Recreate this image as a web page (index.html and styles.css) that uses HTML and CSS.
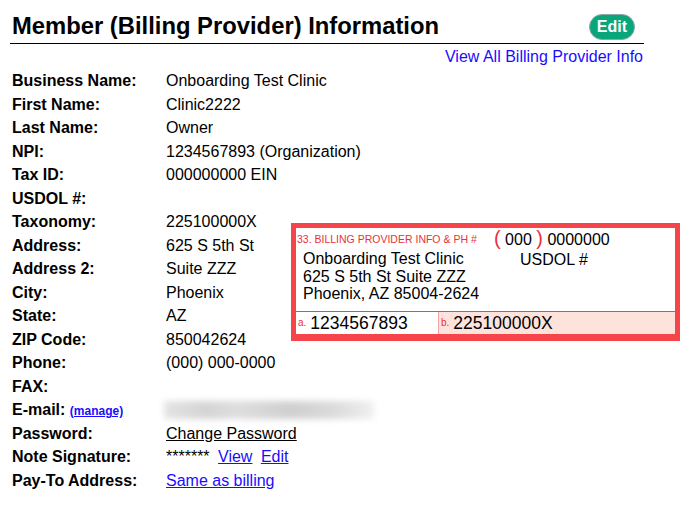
FILE: index.html
```html
<!DOCTYPE html>
<html>
<head>
<meta charset="utf-8">
<link rel="stylesheet" href="styles.css">
</head>
<body>
<div class="page">
  <div class="header">
    <h1 class="title">Member (Billing Provider) Information</h1>
    <span class="edit-btn">Edit</span>
  </div>
  <div class="view-all"><a href="#">View All Billing Provider Info</a></div>
  <div class="info">
    <div class="label">Business Name:</div><div class="value">Onboarding Test Clinic</div>
    <div class="label">First Name:</div><div class="value">Clinic2222</div>
    <div class="label">Last Name:</div><div class="value">Owner</div>
    <div class="label">NPI:</div><div class="value">1234567893 (Organization)</div>
    <div class="label">Tax ID:</div><div class="value">000000000 EIN</div>
    <div class="label">USDOL #:</div><div class="value"></div>
    <div class="label">Taxonomy:</div><div class="value">225100000X</div>
    <div class="label">Address:</div><div class="value">625 S 5th St</div>
    <div class="label">Address 2:</div><div class="value">Suite ZZZ</div>
    <div class="label">City:</div><div class="value">Phoenix</div>
    <div class="label">State:</div><div class="value">AZ</div>
    <div class="label">ZIP Code:</div><div class="value">850042624</div>
    <div class="label">Phone:</div><div class="value">(000) 000-0000</div>
    <div class="label">FAX:</div><div class="value"></div>
    <div class="label">E-mail: <a href="#" class="manage">(manage)</a></div><div class="value"><span class="blurred"></span></div>
    <div class="label">Password:</div><div class="value"><a href="#" class="dark-link">Change Password</a></div>
    <div class="label">Note Signature:</div><div class="value">******* <a href="#" class="sig-link">View</a> <a href="#" class="sig-link">Edit</a></div>
    <div class="label">Pay-To Address:</div><div class="value"><a href="#">Same as billing</a></div>
  </div>

  <div class="claim-box">
    <div class="claim-top">
      <div class="claim-left">
        <div class="claim-caption">33. BILLING PROVIDER INFO &amp; PH #</div>
        <div class="claim-addr">Onboarding Test Clinic<br>625 S 5th St Suite ZZZ<br>Phoenix, AZ 85004-2624</div>
      </div>
      <div class="claim-right">
        <div class="claim-phone"><span class="paren">(</span> 000 <span class="paren">)</span> 0000000</div>
        <div class="claim-usdol">USDOL #</div>
      </div>
    </div>
    <div class="claim-bottom">
      <div class="cell cell-a"><span class="cell-tag">a.</span>1234567893</div>
      <div class="cell cell-b"><span class="cell-tag">b.</span>225100000X</div>
    </div>
  </div>
</div>
</body>
</html>
```

FILE: styles.css
```css
html, body {
  margin: 0;
  padding: 0;
  background: #fff;
}
body {
  font-family: "Liberation Sans", Arial, sans-serif;
  color: #000;
}
.page {
  position: relative;
  width: 683px;
  height: 505px;
  overflow: hidden;
}
.header {
  margin-left: 10px;
  width: 634px;
  display: flex;
  align-items: flex-end;
  justify-content: space-between;
  border-bottom: 1px solid #000;
  height: 44px;
  box-sizing: border-box;
  padding-bottom: 3px;
}
.title {
  margin: 0 0 0 2px;
  font-size: 23.8px;
  line-height: 28px;
  font-weight: bold;
}
.edit-btn {
  display: inline-block;
  margin-right: 9px;
  margin-bottom: 0;
  background: #0aa67b;
  color: #fff;
  font-weight: bold;
  font-size: 16px;
  line-height: 24px;
  padding: 0 7px;
  border-radius: 13px;
  border: 1px solid #8aa;
}
.view-all {
  width: 643px;
  text-align: right;
  font-size: 16px;
  line-height: 18px;
  margin-top: 4px;
}
.view-all a {
  color: #1a0dff;
  text-decoration: none;
}
.info {
  display: grid;
  grid-template-columns: 154px 1fr;
  margin-left: 12px;
  margin-top: 3px;
  font-size: 16px;
  line-height: 23.5px;
}
.label {
  font-weight: bold;
}
.manage {
  font-size: 12px;
  line-height: 14px;
  color: #1a0dff;
}
.blurred {
  display: block;
  width: 210px;
  height: 18px;
  margin: 3px 0 0 -2px;
  background: linear-gradient(90deg, #e4e4e4, #d4d4d4 20%, #dedede 35%, #cfcfcf 60%, #dadada 80%, #f0f0f0);
  filter: blur(3px);
}
.value a {
  color: #1a0dff;
}
.value a.dark-link {
  color: #000;
}
.value a.sig-link {
  margin-left: 4px;
}
.claim-box {
  position: absolute;
  left: 291px;
  top: 223px;
  width: 389px;
  height: 118px;
  box-sizing: border-box;
  border: 5px solid #f5444a;
  border-bottom-width: 7px;
  display: flex;
  flex-direction: column;
  background: #fff;
}
.claim-top {
  flex: 1;
  display: flex;
  border-bottom: 1px solid #f5444a;
}
.claim-left {
  width: 200px;
}
.claim-caption {
  color: #e8323a;
  font-size: 10.5px;
  padding-left: 1px;
  margin-top: 5px;
  line-height: 12px;
  white-space: nowrap;
}
.claim-addr {
  font-size: 16px;
  line-height: 17.5px;
  padding-left: 7px;
  margin-top: 5px;
}
.claim-right {
  flex: 1;
}
.claim-phone {
  font-size: 16px;
  line-height: 20px;
  margin-left: -2px;
}
.paren {
  color: #e8323a;
  font-size: 20px;
}
.claim-usdol {
  font-size: 16px;
  margin-left: 24px;
  line-height: 20px;
}
.claim-bottom {
  display: flex;
  height: 22px;
}
.cell {
  font-size: 17.5px;
  line-height: 22px;
}
.cell-a {
  width: 142px;
  border-right: 1px solid #f5a0a0;
}
.cell-b {
  flex: 1;
  background: #fde3dc;
}
.cell-tag {
  color: #e8323a;
  font-size: 10px;
  margin: 0 4px 0 2px;
  vertical-align: 3px;
}
```
